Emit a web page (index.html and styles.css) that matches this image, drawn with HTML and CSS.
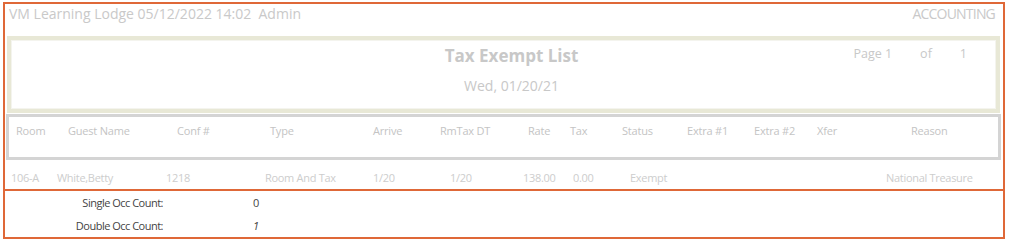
FILE: index.html
```html
<!DOCTYPE html>
<html>
<head>
<meta charset="utf-8">
<link rel="stylesheet" href="styles.css">
</head>
<body>
<div class="report">
  <div class="topbar">
    <span>VM Learning Lodge 05/12/2022 14:02&nbsp; Admin</span>
    <span class="dept">ACCOUNTING</span>
  </div>
  <div class="titlebox">
    <div class="spacer"></div>
    <div class="titles">
      <div class="title">Tax Exempt List</div>
      <div class="date">Wed, 01/20/21</div>
    </div>
    <div class="page"><span>Page 1</span><span>of</span><span>1</span></div>
  </div>
  <div class="thead">
    <span>Room</span><span>Guest Name</span><span>Conf #</span><span>Type</span><span>Arrive</span><span>RmTax DT</span><span>Rate</span><span>Tax</span><span>Status</span><span>Extra #1</span><span>Extra #2</span><span>Xfer</span><span>Reason</span>
  </div>
  <div class="drow">
    <span>106-A</span><span>White,Betty</span><span>1218</span><span>Room And Tax</span><span>1/20</span><span>1/20</span><span>138.00</span><span>0.00</span><span>Exempt</span><span>National Treasure</span>
  </div>
</div>
<div class="summary">
  <div class="sumrow"><span class="label">Single Occ Count:</span><span class="val">0</span></div>
  <div class="sumrow"><span class="label">Double Occ Count:</span><span class="val italic">1</span></div>
</div>
</body>
</html>
```
FILE: styles.css
```css
body {
  margin: 0;
  background: #ffffff;
  font-family: "Open Sans", "Noto Sans", sans-serif;
}
.report {
  margin: 2px 0 0 3px;
  width: 1002px;
  box-sizing: border-box;
  border: 2px solid #df6838;
  border-bottom: none;
}
.topbar {
  height: 32px;
  display: flex;
  justify-content: space-between;
  padding: 0 8px 0 4px;
  font-size: 14px;
  line-height: 20px;
  color: #c9c9c9;
}
.dept {
  letter-spacing: -0.8px;
}
.titlebox {
  margin: 0 3px 0 2px;
  height: 77px;
  box-sizing: border-box;
  border: 4px solid #e8e8d6;
  box-shadow: inset 0 0 0 1px #f4f4ee;
  display: grid;
  grid-template-columns: 1fr auto 1fr;
  padding-left: 16px;
}
.titles {
  padding-top: 4px;
  text-align: center;
}
.title {
  font-size: 17px;
  font-weight: bold;
  line-height: 24px;
  color: #c8c8c8;
}
.date {
  margin-top: 6px;
  font-size: 14px;
  line-height: 24px;
  color: #c8c8c8;
}
.page {
  justify-self: end;
  display: flex;
  gap: 28px;
  padding: 5px 29px 0 0;
  font-size: 12.5px;
  line-height: 18px;
  color: #c8c8c8;
}
.thead {
  margin: 1px 2px 0 1px;
  height: 46px;
  box-sizing: border-box;
  border: 3px solid #d4d4d4;
  padding: 5px 0 0 7px;
  display: grid;
  grid-template-columns: 52px 109px 93px 103px 67px 88px 42px 52px 65px 67px 63px 94px 1fr;
  font-size: 11px;
  line-height: 18px;
  letter-spacing: -0.2px;
  color: #c4c4c4;
}
.drow {
  height: 29px;
  box-sizing: border-box;
  padding: 9px 0 0 6px;
  display: grid;
  grid-template-columns: 46px 109px 99px 108px 77px 73px 50px 57px 256px 1fr;
  font-size: 11px;
  line-height: 18px;
  letter-spacing: -0.3px;
  color: #cdcdcd;
}
.summary {
  margin-left: 3px;
  width: 1002px;
  box-sizing: border-box;
  border: 2px solid #df6838;
}
.sumrow {
  height: 23px;
  display: grid;
  grid-template-columns: 158px 1fr;
  column-gap: 90px;
  align-items: center;
  font-size: 11px;
  letter-spacing: -0.5px;
  color: #444444;
}
.label {
  text-align: right;
}
.italic {
  font-style: italic;
}
```
